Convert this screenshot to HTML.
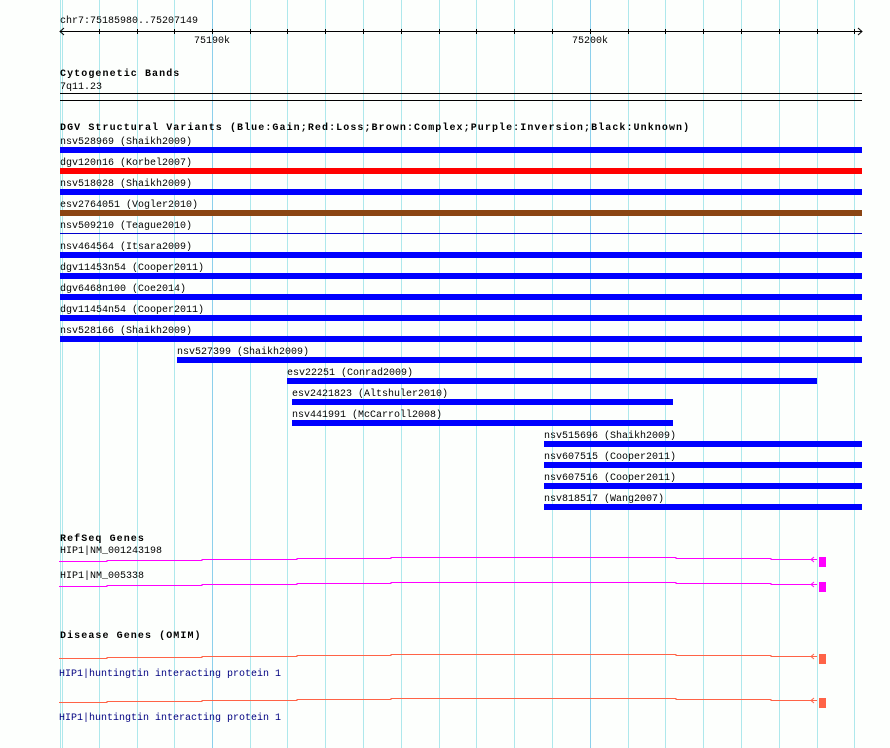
<!DOCTYPE html>
<html><head><style>
body{margin:0;width:890px;height:748px;background:#fdfffd;position:relative;overflow:hidden;font-family:"Liberation Mono","DejaVu Sans Mono",monospace;font-size:10px;color:#000}
.g{position:absolute;top:0;height:748px;width:1px;background:#aee8ec}
.t{position:absolute;white-space:pre;line-height:12px;margin-top:2px}
.b{font-weight:bold;letter-spacing:1.08px;font-size:10px}
.bar{position:absolute;height:6px;background:#0000ff}
.l{position:absolute;height:1px}
</style></head><body>
<div class="g" style="left:60px"></div><div class="g" style="left:62px"></div>
<div class="g" style="left:99px"></div><div class="g" style="left:137px"></div><div class="g" style="left:174px"></div>
<div class="g" style="left:212px;background:#8cd0ec"></div><div class="g" style="left:250px"></div><div class="g" style="left:287px"></div>
<div class="g" style="left:325px"></div><div class="g" style="left:363px"></div><div class="g" style="left:401px"></div>
<div class="g" style="left:439px"></div><div class="g" style="left:476px"></div><div class="g" style="left:514px"></div>
<div class="g" style="left:552px"></div><div class="g" style="left:590px;background:#8cd0ec"></div><div class="g" style="left:628px"></div>
<div class="g" style="left:665px"></div><div class="g" style="left:703px"></div><div class="g" style="left:741px"></div>
<div class="g" style="left:779px"></div><div class="g" style="left:817px"></div><div class="g" style="left:854px"></div>

<div class="t" style="left:60px;top:14px">chr7:75185980..75207149</div>
<svg style="position:absolute;left:0;top:0" width="890" height="40">
<line x1="60" y1="31.5" x2="862" y2="31.5" stroke="#000"/>
<polyline points="64,28 60,31.5 64,35" fill="none" stroke="#000"/>
<polyline points="858,28 862,31.5 858,35" fill="none" stroke="#000"/>
<g stroke="#000">
<line x1="99.5" y1="29" x2="99.5" y2="34"/><line x1="137.5" y1="29" x2="137.5" y2="34"/><line x1="174.5" y1="29" x2="174.5" y2="34"/><line x1="212.5" y1="29" x2="212.5" y2="34"/><line x1="250.5" y1="29" x2="250.5" y2="34"/><line x1="287.5" y1="29" x2="287.5" y2="34"/><line x1="325.5" y1="29" x2="325.5" y2="34"/><line x1="363.5" y1="29" x2="363.5" y2="34"/><line x1="401.5" y1="29" x2="401.5" y2="34"/><line x1="439.5" y1="29" x2="439.5" y2="34"/><line x1="476.5" y1="29" x2="476.5" y2="34"/><line x1="514.5" y1="29" x2="514.5" y2="34"/><line x1="552.5" y1="29" x2="552.5" y2="34"/><line x1="590.5" y1="29" x2="590.5" y2="34"/><line x1="628.5" y1="29" x2="628.5" y2="34"/><line x1="665.5" y1="29" x2="665.5" y2="34"/><line x1="703.5" y1="29" x2="703.5" y2="34"/><line x1="741.5" y1="29" x2="741.5" y2="34"/><line x1="779.5" y1="29" x2="779.5" y2="34"/><line x1="817.5" y1="29" x2="817.5" y2="34"/><line x1="854.5" y1="29" x2="854.5" y2="34"/>
</g></svg>
<div class="t" style="left:194px;top:34px">75190k</div>
<div class="t" style="left:572px;top:34px">75200k</div>

<div class="t b" style="left:60px;top:67px">Cytogenetic Bands</div>
<div class="t" style="left:60px;top:80px">7q11.23</div>
<div class="l" style="left:60px;width:802px;top:93px;background:#000"></div>
<div class="l" style="left:60px;width:802px;top:100px;background:#000"></div>

<div class="t b" style="left:60px;top:121px">DGV Structural Variants (Blue:Gain;Red:Loss;Brown:Complex;Purple:Inversion;Black:Unknown)</div>
<div class="t" style="left:60px;top:135px">nsv528969 (Shaikh2009)</div><div class="bar" style="left:60px;width:802px;top:147px"></div>
<div class="t" style="left:60px;top:156px">dgv120n16 (Korbel2007)</div><div class="bar" style="left:60px;width:802px;top:168px;background:#ff0000"></div>
<div class="t" style="left:60px;top:177px">nsv518028 (Shaikh2009)</div><div class="bar" style="left:60px;width:802px;top:189px"></div>
<div class="t" style="left:60px;top:198px">esv2764051 (Vogler2010)</div><div class="bar" style="left:60px;width:802px;top:210px;background:#8b4513"></div>
<div class="t" style="left:60px;top:219px">nsv509210 (Teague2010)</div><div class="l" style="left:60px;width:802px;top:233px;background:#0000cc"></div>
<div class="t" style="left:60px;top:240px">nsv464564 (Itsara2009)</div><div class="bar" style="left:60px;width:802px;top:252px"></div>
<div class="t" style="left:60px;top:261px">dgv11453n54 (Cooper2011)</div><div class="bar" style="left:60px;width:802px;top:273px"></div>
<div class="t" style="left:60px;top:282px">dgv6468n100 (Coe2014)</div><div class="bar" style="left:60px;width:802px;top:294px"></div>
<div class="t" style="left:60px;top:303px">dgv11454n54 (Cooper2011)</div><div class="bar" style="left:60px;width:802px;top:315px"></div>
<div class="t" style="left:60px;top:324px">nsv528166 (Shaikh2009)</div><div class="bar" style="left:60px;width:802px;top:336px"></div>
<div class="t" style="left:177px;top:345px">nsv527399 (Shaikh2009)</div><div class="bar" style="left:177px;width:685px;top:357px"></div>
<div class="t" style="left:287px;top:366px">esv22251 (Conrad2009)</div><div class="bar" style="left:287px;width:530px;top:378px"></div>
<div class="t" style="left:292px;top:387px">esv2421823 (Altshuler2010)</div><div class="bar" style="left:292px;width:381px;top:399px"></div>
<div class="t" style="left:292px;top:408px">nsv441991 (McCarroll2008)</div><div class="bar" style="left:292px;width:381px;top:420px"></div>
<div class="t" style="left:544px;top:429px">nsv515696 (Shaikh2009)</div><div class="bar" style="left:544px;width:318px;top:441px"></div>
<div class="t" style="left:544px;top:450px">nsv607515 (Cooper2011)</div><div class="bar" style="left:544px;width:318px;top:462px"></div>
<div class="t" style="left:544px;top:471px">nsv607516 (Cooper2011)</div><div class="bar" style="left:544px;width:318px;top:483px"></div>
<div class="t" style="left:544px;top:492px">nsv818517 (Wang2007)</div><div class="bar" style="left:544px;width:318px;top:504px"></div>

<div class="t b" style="left:60px;top:532px">RefSeq Genes</div>
<div class="t" style="left:60px;top:544px">HIP1|NM_001243198</div>
<div class="t" style="left:60px;top:569px">HIP1|NM_005338</div>
<div class="t b" style="left:60px;top:629px">Disease Genes (OMIM)</div>
<div class="t" style="left:59px;top:667px;color:#000080">HIP1|huntingtin interacting protein 1</div>
<div class="t" style="left:59px;top:711px;color:#000080">HIP1|huntingtin interacting protein 1</div>

<svg style="position:absolute;left:0;top:540px" width="890" height="180">
<g fill="none" stroke="#ff00ff">
<polyline points="59,21.5 107,21.5 107,20.5 202,20.5 202,19.5 297,19.5 297,18.5 391,18.5 391,17.5 676,17.5 676,18.5 771,18.5 771,19.5 817,19.5"/>
<polyline points="814,17 811,19.5 814,22"/>
<polyline points="59,46.5 107,46.5 107,45.5 202,45.5 202,44.5 297,44.5 297,43.5 391,43.5 391,42.5 676,42.5 676,43.5 771,43.5 771,44.5 817,44.5"/>
<polyline points="814,42 811,44.5 814,47"/>
</g>
<rect x="819" y="17" width="7" height="10" fill="#ff00ff"/>
<rect x="819" y="42" width="7" height="10" fill="#ff00ff"/>
<g fill="none" stroke="#ff6347">
<polyline points="59,118.5 107,118.5 107,117.5 202,117.5 202,116.5 297,116.5 297,115.5 391,115.5 391,114.5 676,114.5 676,115.5 771,115.5 771,116.5 817,116.5"/>
<polyline points="814,114 811,116.5 814,119"/>
<polyline points="59,162.5 107,162.5 107,161.5 202,161.5 202,160.5 297,160.5 297,159.5 391,159.5 391,158.5 676,158.5 676,159.5 771,159.5 771,160.5 817,160.5"/>
<polyline points="814,158 811,160.5 814,163"/>
</g>
<rect x="819" y="114" width="7" height="10" fill="#ff6347"/>
<rect x="819" y="158" width="7" height="10" fill="#ff6347"/>
</svg>
</body></html>
